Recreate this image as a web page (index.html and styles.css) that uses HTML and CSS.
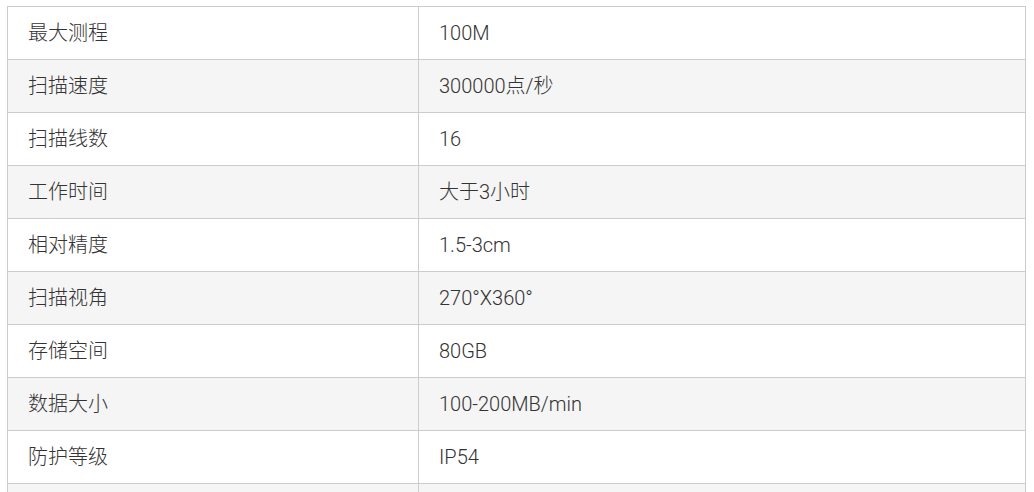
FILE: index.html
```html
<!DOCTYPE html>
<html lang="zh">
<head>
<meta charset="utf-8">
<link rel="stylesheet" href="styles.css">
</head>
<body>
<table class="spec">
  <colgroup><col class="c-name"><col class="c-val"></colgroup>
  <tbody>
    <tr><td>最大测程</td><td>100M</td></tr>
    <tr><td>扫描速度</td><td>300000点/秒</td></tr>
    <tr><td>扫描线数</td><td>16</td></tr>
    <tr><td>工作时间</td><td>大于3小时</td></tr>
    <tr><td>相对精度</td><td>1.5-3cm</td></tr>
    <tr><td>扫描视角</td><td>270°X360°</td></tr>
    <tr><td>存储空间</td><td>80GB</td></tr>
    <tr><td>数据大小</td><td>100-200MB/min</td></tr>
    <tr><td>防护等级</td><td>IP54</td></tr>
    <tr><td></td><td></td></tr>
  </tbody>
</table>
</body>
</html>
```
FILE: styles.css
```css
html, body {
  margin: 0;
  background: #fff;
}
body {
  padding: 6px 0 0 7px;
  font-family: Roboto, "Noto Sans CJK SC", sans-serif;
  font-size: 20px;
  font-weight: 300;
  color: #333;
}
.spec {
  border-collapse: collapse;
  table-layout: fixed;
  width: 1019px;
}
.c-name { width: 411px; }
.spec td {
  border: 1px solid #ccc;
  height: 52px;
  padding: 0 20px;
  vertical-align: middle;
  line-height: 24px;
}
.spec tr:nth-child(even) td {
  background: #f5f5f5;
}
```
